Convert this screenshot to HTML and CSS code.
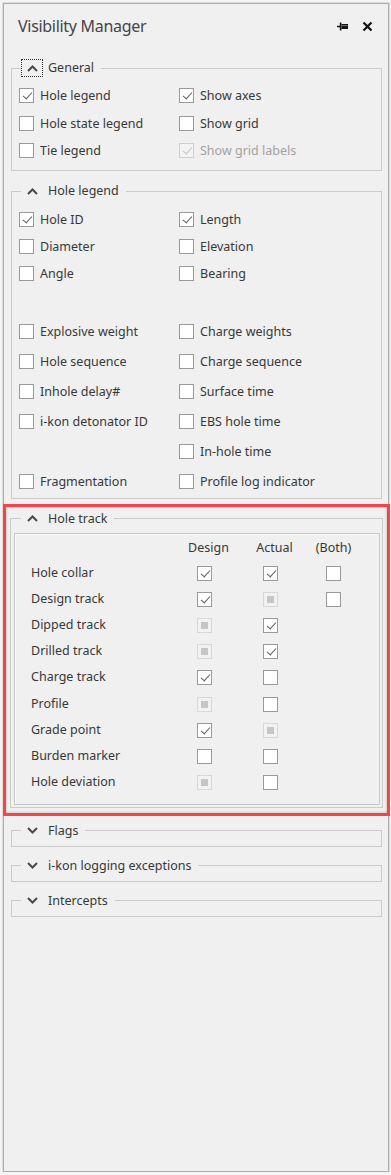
FILE: index.html
```html
<!DOCTYPE html>
<html lang="en">
<head>
    <meta charset="UTF-8">
    <meta name="viewport" content="width=device-width, initial-scale=1.0">
    <title>Visibility Manager</title>
    <link rel="stylesheet" href="styles.css">
</head>
<body>
    <div class="panel">
        <div class="panel-head">
            <h1 class="panel-title">Visibility Manager</h1>
            <div class="head-tools">
                <svg width="12" height="9" viewBox="0 0 12 9"><path d="M0 4.5h3" stroke="#111" stroke-width="1.5"/><path d="M3.6 0.5v8" stroke="#111" stroke-width="1.6"/><rect x="4.5" y="2" width="6.5" height="5" fill="#111"/><path d="M5 3.6h5.5" stroke="#777" stroke-width="1"/></svg>
                <svg width="11" height="11" viewBox="0 0 11 11"><path d="M1.5 1.5l8 8M9.5 1.5l-8 8" stroke="#111" stroke-width="2.2"/></svg>
            </div>
        </div>

        <!-- General -->
        <fieldset class="group group-general">
            <legend><span class="toggle focused"><svg width="11" height="7" viewBox="0 0 11 7"><path d="M1 6l4.5-4.5 4.5 4.5" fill="none" stroke="#4a4a4a" stroke-width="2"/></svg></span>General</legend>
            <div class="opts">
                <label class="opt"><span class="box on"></span>Hole legend</label>
                <label class="opt"><span class="box on"></span>Show axes</label>
                <label class="opt"><span class="box"></span>Hole state legend</label>
                <label class="opt"><span class="box"></span>Show grid</label>
                <label class="opt"><span class="box"></span>Tie legend</label>
                <label class="opt disabled"><span class="box on"></span>Show grid labels</label>
            </div>
        </fieldset>

        <!-- Hole legend -->
        <fieldset class="group group-legend">
            <legend><span class="toggle"><svg width="11" height="7" viewBox="0 0 11 7"><path d="M1 6l4.5-4.5 4.5 4.5" fill="none" stroke="#4a4a4a" stroke-width="2"/></svg></span>Hole legend</legend>
            <div class="opts opts-legend">
                <label class="opt"><span class="box on"></span>Hole ID</label>
                <label class="opt"><span class="box on"></span>Length</label>
                <label class="opt"><span class="box"></span>Diameter</label>
                <label class="opt"><span class="box"></span>Elevation</label>
                <label class="opt"><span class="box"></span>Angle</label>
                <label class="opt"><span class="box"></span>Bearing</label>
                <div class="spacer"></div>
                <label class="opt"><span class="box"></span>Explosive weight</label>
                <label class="opt"><span class="box"></span>Charge weights</label>
                <label class="opt"><span class="box"></span>Hole sequence</label>
                <label class="opt"><span class="box"></span>Charge sequence</label>
                <label class="opt"><span class="box"></span>Inhole delay#</label>
                <label class="opt"><span class="box"></span>Surface time</label>
                <label class="opt"><span class="box"></span>i-kon detonator ID</label>
                <label class="opt"><span class="box"></span>EBS hole time</label>
                <div></div>
                <label class="opt"><span class="box"></span>In-hole time</label>
                <label class="opt"><span class="box"></span>Fragmentation</label>
                <label class="opt"><span class="box"></span>Profile log indicator</label>
            </div>
        </fieldset>

        <!-- Hole track (highlighted) -->
        <div class="highlight">
            <fieldset class="group group-track">
                <legend><span class="toggle"><svg width="11" height="7" viewBox="0 0 11 7"><path d="M1 6l4.5-4.5 4.5 4.5" fill="none" stroke="#4a4a4a" stroke-width="2"/></svg></span>Hole track</legend>
                <div class="track-box">
                    <div class="track-grid">
                        <div></div>
                        <div class="col-head shift">Design</div>
                        <div class="col-head shift">Actual</div>
                        <div class="col-head">(Both)</div>

                        <div class="track-label">Hole collar</div>
                        <div class="cell"><span class="box on"></span></div>
                        <div class="cell"><span class="box on"></span></div>
                        <div class="cell"><span class="box"></span></div>

                        <div class="track-label">Design track</div>
                        <div class="cell"><span class="box on"></span></div>
                        <div class="cell"><span class="box mixed"></span></div>
                        <div class="cell"><span class="box"></span></div>

                        <div class="track-label">Dipped track</div>
                        <div class="cell"><span class="box mixed"></span></div>
                        <div class="cell"><span class="box on"></span></div>
                        <div></div>

                        <div class="track-label">Drilled track</div>
                        <div class="cell"><span class="box mixed"></span></div>
                        <div class="cell"><span class="box on"></span></div>
                        <div></div>

                        <div class="track-label">Charge track</div>
                        <div class="cell"><span class="box on"></span></div>
                        <div class="cell"><span class="box"></span></div>
                        <div></div>

                        <div class="track-label">Profile</div>
                        <div class="cell"><span class="box mixed"></span></div>
                        <div class="cell"><span class="box"></span></div>
                        <div></div>

                        <div class="track-label">Grade point</div>
                        <div class="cell"><span class="box on"></span></div>
                        <div class="cell"><span class="box mixed"></span></div>
                        <div></div>

                        <div class="track-label">Burden marker</div>
                        <div class="cell"><span class="box"></span></div>
                        <div class="cell"><span class="box"></span></div>
                        <div></div>

                        <div class="track-label">Hole deviation</div>
                        <div class="cell"><span class="box mixed"></span></div>
                        <div class="cell"><span class="box"></span></div>
                        <div></div>
                    </div>
                </div>
            </fieldset>
        </div>

        <!-- Collapsed groups -->
        <fieldset class="group collapsed first">
            <legend><span class="toggle"><svg width="11" height="7" viewBox="0 0 11 7"><path d="M1 1l4.5 4.5 4.5-4.5" fill="none" stroke="#4a4a4a" stroke-width="2"/></svg></span>Flags</legend>
        </fieldset>
        <fieldset class="group collapsed">
            <legend><span class="toggle"><svg width="11" height="7" viewBox="0 0 11 7"><path d="M1 1l4.5 4.5 4.5-4.5" fill="none" stroke="#4a4a4a" stroke-width="2"/></svg></span>i-kon logging exceptions</legend>
        </fieldset>
        <fieldset class="group collapsed">
            <legend><span class="toggle"><svg width="11" height="7" viewBox="0 0 11 7"><path d="M1 1l4.5 4.5 4.5-4.5" fill="none" stroke="#4a4a4a" stroke-width="2"/></svg></span>Intercepts</legend>
        </fieldset>
    </div>
</body>
</html>
```

FILE: styles.css
```css
* {
    margin: 0;
    padding: 0;
    box-sizing: border-box;
}

body {
    font-family: "Noto Sans", "Segoe UI", sans-serif;
    font-size: 12.5px;
    color: #383838;
    background: #f4f4f4;
}

.panel {
    margin: 3px 0 0 3px;
    width: 386px;
    height: 1169px;
    background: #f0f0f0;
    border: 1px solid #acacac;
    box-shadow: 0 0 0 1px #dcdcdc;
}

.panel-head {
    display: flex;
    align-items: center;
    height: 44px;
    padding: 0 15px 0 14px;
}

.panel-title {
    flex: 1;
    font-size: 16px;
    font-weight: 400;
    letter-spacing: -0.3px;
    color: #454545;
}

.head-tools {
    display: flex;
    align-items: center;
    gap: 13px;
}

/* group boxes */
.group {
    margin: 11px 6px 0 7px;
    border: 1px solid #cbcbcb;
    min-width: 0;
}

.group legend {
    height: 18px;
    line-height: 18px;
    margin-left: 2px;
    padding-right: 7px;
    white-space: nowrap;
}

.toggle {
    display: inline-flex;
    align-items: center;
    justify-content: center;
    width: 22px;
    height: 18px;
    margin-right: 5px;
    vertical-align: top;
    border: 1px solid transparent;
}

.toggle.focused {
    border: 1px dotted #333;
}

.group-general {
    padding: 5px 7px 5.5px 7px;
}

.group-legend {
    padding: 5.5px 7px 2px 7px;
}

.opts {
    display: grid;
    grid-template-columns: 160px 1fr;
    grid-auto-rows: 27.5px;
}

.opts-legend {
    grid-template-rows: 27px 27px 27px 29.5px repeat(6, 30px);
}

.spacer {
    grid-column: 1 / -1;
}

.opt {
    display: flex;
    align-items: center;
    gap: 6px;
    white-space: nowrap;
}

.opt.disabled {
    color: #a2a2a2;
}

/* checkboxes */
.box {
    position: relative;
    flex: none;
    width: 15px;
    height: 15px;
    background: #fff;
    border: 1px solid #999;
}

.box.on::after {
    content: "";
    position: absolute;
    left: 4.5px;
    top: 1px;
    width: 4px;
    height: 8px;
    border: solid #5c5c5c;
    border-width: 0 1.4px 1.4px 0;
    transform: rotate(42deg);
}

.disabled .box {
    border-color: #cfcfcf;
    background: #f3f3f3;
}

.disabled .box.on::after {
    border-color: #c4c4c4;
}

.box.mixed {
    border-color: #d8d8d8;
    background: #f2f2f2;
}

.box.mixed::after {
    content: "";
    position: absolute;
    left: 3px;
    top: 3px;
    width: 7px;
    height: 7px;
    background: #c6c6c6;
}

/* hole track */
.highlight {
    margin: 5px -2px 0 -1px;
    padding: 2.5px 4px 5px 4px;
    border: 3px solid #f04646;
    box-shadow: inset 0 0 3px rgba(0, 0, 0, 0.28);
}

.group-track {
    margin: 0;
    padding: 5.5px 2px 2px 3px;
}

.group-track legend {
    margin-left: 7px;
}

.track-box {
    border: 1px solid #c8c8c8;
    box-shadow: inset 1px 1px 0 #fafafa;
    padding: 0 0 8px 16px;
}

.track-grid {
    display: grid;
    grid-template-columns: 140.5px 66px 66px 60px;
    grid-template-rows: 26px repeat(9, 26.2px);
    align-items: center;
}

.col-head {
    text-align: center;
}

.col-head.shift {
    padding-left: 8px;
}

.track-label {
    white-space: nowrap;
    margin-top: -2px;
}

.cell {
    display: flex;
    justify-content: center;
}

/* collapsed groups */
.group.collapsed {
    margin-top: 10px;
    padding: 0 7px 6px 7px;
}

.group.collapsed.first {
    margin-top: 6px;
}
```
